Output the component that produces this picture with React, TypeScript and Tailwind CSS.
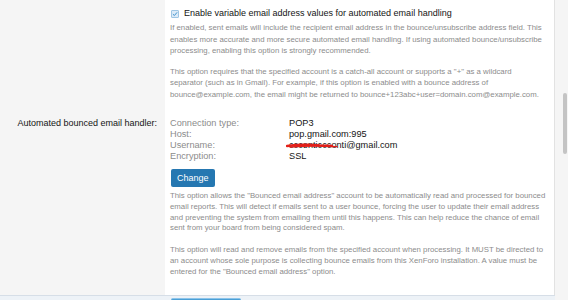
export default function App() {
  const font = { fontFamily: '"Liberation Sans", Arial, sans-serif' };
  return (
    <div style={font} className="w-[568px] h-[300px] overflow-hidden flex bg-[#f5f5f5]">
      <div className="w-[555px] flex flex-col">
        <div className="flex-1 flex flex-col border-r border-[#e2e2e2]">
          {/* Row 1 */}
          <div className="flex">
            <div className="w-[165px] bg-[#f5f5f5]" />
            <div className="flex-1 bg-white pl-[5px] pr-[8px] pt-[8px] pb-[9px]">
              <label className="flex items-center gap-[5px] text-[9px] leading-[11px] text-[#141414]">
                <span className="ml-[1px] w-[8px] h-[8px] flex items-center justify-center rounded-[1px] border border-[#9fc6e4] bg-[#dcebf8]">
                  <svg viewBox="0 0 8 8" className="w-[6px] h-[6px]">
                    <path d="M1.2 4.2 L3.2 6 L6.8 1.8" fill="none" stroke="#3d8fcc" strokeWidth="1.3" />
                  </svg>
                </span>
                Enable variable email address values for automated email handling
              </label>
              <div className="mt-[3px] text-[7.8px] leading-[11.5px] text-[#8c8c8c]">
                <p>
                  If enabled, sent emails will include the recipient email address in the bounce/unsubscribe address field. This enables more accurate and more secure automated email handling. If using automated bounce/unsubscribe processing, enabling this option is strongly recommended.
                </p>
                <p className="mt-[9px]">
                  This option requires that the specified account is a catch-all account or supports a "+" as a wildcard separator (such as in Gmail). For example, if this option is enabled with a bounce address of bounce@example.com, the email might be returned to bounce+123abc+user=domain.com@example.com.
                </p>
              </div>
            </div>
          </div>
          {/* Row 2 */}
          <div className="flex flex-1">
            <div className="w-[165px] bg-[#f5f5f5] pr-[8px] pt-[9px] text-right text-[9px] leading-[11px] text-[#141414]">
              Automated bounced email handler:
            </div>
            <div className="flex-1 bg-white pl-[5px] pr-[8px] pt-[9px] pb-[17px]">
              <div className="grid grid-cols-[119px_1fr] text-[9.2px] leading-[11px]">
                <span className="text-[#8c8c8c]">Connection type:</span>
                <span className="text-[#141414]">POP3</span>
                <span className="text-[#8c8c8c]">Host:</span>
                <span className="text-[#141414]">pop.gmail.com:995</span>
                <span className="text-[#8c8c8c]">Username:</span>
                <span className="relative text-[#141414]">
                  cccenticcconti@gmail.com
                  <svg viewBox="0 0 56 8" className="absolute left-[-3px] top-[1px] w-[56px] h-[8px]">
                    <path d="M1 5 C12 3.5 24 3.6 34 4.4 L46 5" fill="none" stroke="#e3201b" strokeWidth="2.4" strokeLinecap="round" />
                    <path d="M4 6 C16 5 30 4.6 51 5.6" fill="none" stroke="#e3201b" strokeWidth="1.3" strokeLinecap="round" />
                  </svg>
                </span>
                <span className="text-[#8c8c8c]">Encryption:</span>
                <span className="text-[#141414]">SSL</span>
              </div>
              <button className="mt-[7px] ml-[1px] h-[18px] px-[6px] rounded-[2px] bg-[#2577b1] text-white text-[9px] leading-[18px]">
                Change
              </button>
              <div className="mt-[3px] text-[7.8px] leading-[10.8px] text-[#8c8c8c]">
                <p>
                  This option allows the "Bounced email address" account to be automatically read and processed for bounced email reports. This will detect if emails sent to a user bounce, forcing the user to update their email address and preventing the system from emailing them until this happens. This can help reduce the chance of email sent from your board from being considered spam.
                </p>
                <p className="mt-[11px]">
                  This option will read and remove emails from the specified account when processing. It MUST be directed to an account whose sole purpose is collecting bounce emails from this XenForo installation. A value must be entered for the "Bounced email address" option.
                </p>
              </div>
            </div>
          </div>
        </div>
        {/* Footer */}
        <div className="h-[5px] shrink-0 border-t border-[#d6dee7] bg-[#edf2f7] pl-[171px] pt-[2px]">
          <div className="w-[70px] h-[4px] rounded-t-[2px] bg-[#4a9fd6] border-t border-[#8cc4ea]" />
        </div>
      </div>
      <div className="relative flex-1 bg-[#f5f5f5]">
        <div className="absolute left-[8px] top-[93px] w-[4px] h-[61px] rounded-full bg-[#c4c4c4]" />
      </div>
    </div>
  );
}
